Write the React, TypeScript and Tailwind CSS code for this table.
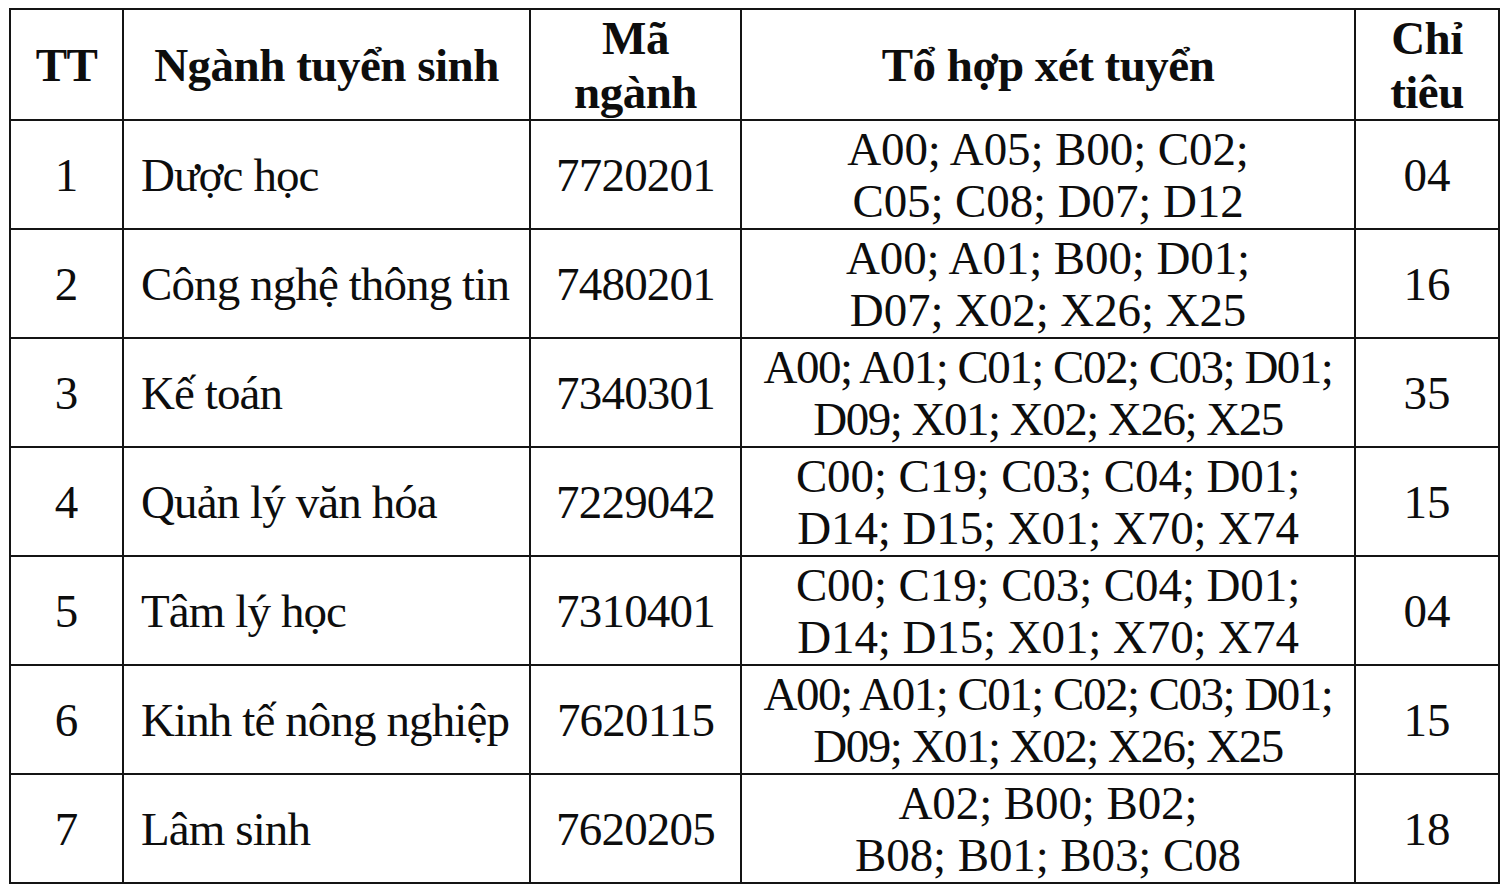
import React from 'react'

type Row = {
  tt: string
  name: string
  code: string
  combos: [string, string]
  quota: string
  tight?: boolean
}

const rows: Row[] = [
  { tt: '1', name: 'Dược học', code: '7720201', combos: ['A00; A05; B00; C02;', 'C05; C08; D07; D12'], quota: '04' },
  { tt: '2', name: 'Công nghệ thông tin', code: '7480201', combos: ['A00; A01; B00; D01;', 'D07; X02; X26; X25'], quota: '16' },
  { tt: '3', name: 'Kế toán', code: '7340301', combos: ['A00; A01; C01; C02; C03; D01;', 'D09; X01; X02; X26; X25'], quota: '35', tight: true },
  { tt: '4', name: 'Quản lý văn hóa', code: '7229042', combos: ['C00; C19; C03; C04; D01;', 'D14; D15; X01; X70; X74'], quota: '15' },
  { tt: '5', name: 'Tâm lý học', code: '7310401', combos: ['C00; C19; C03; C04; D01;', 'D14; D15; X01; X70; X74'], quota: '04' },
  { tt: '6', name: 'Kinh tế nông nghiệp', code: '7620115', combos: ['A00; A01; C01; C02; C03; D01;', 'D09; X01; X02; X26; X25'], quota: '15', tight: true },
  { tt: '7', name: 'Lâm sinh', code: '7620205', combos: ['A02; B00; B02;', 'B08; B01; B03; C08'], quota: '18' }
]

const cell = 'border-2 border-[#141414] align-middle p-0'

export default function App() {
  return (
    <div className="min-h-[893px] w-[1505px] bg-white pl-[9px] pt-[8px] text-[#0d0d0d] font-['Liberation_Serif','Times_New_Roman',serif]">
      <table className="table-fixed border-collapse w-[1489px]">
        <colgroup>
          <col className="w-[113px]" />
          <col className="w-[407px]" />
          <col className="w-[211px]" />
          <col className="w-[614px]" />
          <col className="w-[144px]" />
        </colgroup>
        <thead>
          <tr className="h-[111px] text-[47px] font-bold leading-[54px] tracking-[-0.5px]">
            <th className={`${cell} text-center`}>TT</th>
            <th className={`${cell} text-center`}>Ngành tuyển sinh</th>
            <th className={`${cell} text-center`}>
              Mã
              <br />
              ngành
            </th>
            <th className={`${cell} text-center`}>Tổ hợp xét tuyển</th>
            <th className={`${cell} text-center`}>
              Chỉ
              <br />
              tiêu
            </th>
          </tr>
        </thead>
        <tbody>
          {rows.map((row) => (
            <tr key={row.tt} className="h-[109px] text-[47px] leading-[52px]">
              <td className={`${cell} text-center`}>{row.tt}</td>
              <td className={`${cell} pl-[17px] text-left whitespace-nowrap tracking-[-0.9px]`}>{row.name}</td>
              <td className={`${cell} text-center tracking-[-0.8px]`}>{row.code}</td>
              <td
                className={`${cell} text-center whitespace-nowrap ${
                  row.tight ? 'tracking-[-1.5px]' : 'tracking-[-0.1px]'
                }`}
              >
                {row.combos[0]}
                <br />
                {row.combos[1]}
              </td>
              <td className={`${cell} text-center`}>{row.quota}</td>
            </tr>
          ))}
        </tbody>
      </table>
    </div>
  )
}
